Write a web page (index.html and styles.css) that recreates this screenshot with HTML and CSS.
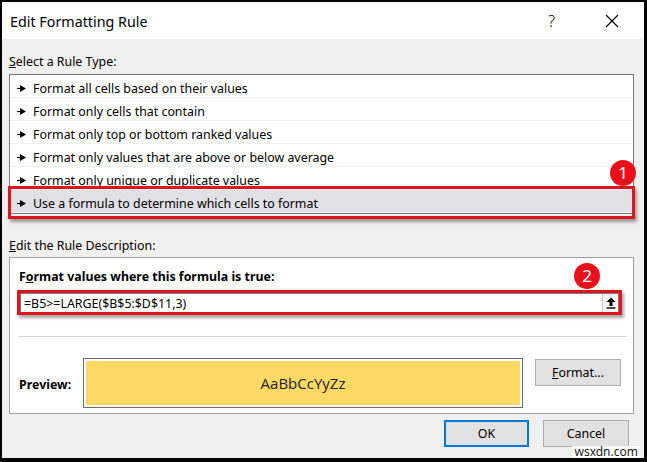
FILE: index.html
```html
<!DOCTYPE html>
<html lang="en">
<head>
    <meta charset="UTF-8">
    <title>Edit Formatting Rule</title>
    <link rel="stylesheet" href="styles.css">
</head>
<body>
    <div class="dialog">
        <div class="titlebar">
            <span class="title">Edit Formatting Rule</span>
            <span class="help">?</span>
            <svg class="close" width="14" height="14" viewBox="0 0 14 14">
                <path d="M1 1 L13 13 M13 1 L1 13" stroke="#000" stroke-width="1.1" fill="none"/>
            </svg>
        </div>

        <div class="content">
            <div class="label"><u>S</u>elect a Rule Type:</div>
            <div class="rule-list">
                <div class="rule"><svg class="arrow" width="9" height="7" viewBox="0 0 9 7"><path d="M0 3.5 H4" stroke="#000" stroke-width="1.2"/><path d="M3 0 L9 3.5 L3 7 Z" fill="#000"/></svg>Format all cells based on their values</div>
                <div class="rule"><svg class="arrow" width="9" height="7" viewBox="0 0 9 7"><path d="M0 3.5 H4" stroke="#000" stroke-width="1.2"/><path d="M3 0 L9 3.5 L3 7 Z" fill="#000"/></svg>Format only cells that contain</div>
                <div class="rule"><svg class="arrow" width="9" height="7" viewBox="0 0 9 7"><path d="M0 3.5 H4" stroke="#000" stroke-width="1.2"/><path d="M3 0 L9 3.5 L3 7 Z" fill="#000"/></svg>Format only top or bottom ranked values</div>
                <div class="rule"><svg class="arrow" width="9" height="7" viewBox="0 0 9 7"><path d="M0 3.5 H4" stroke="#000" stroke-width="1.2"/><path d="M3 0 L9 3.5 L3 7 Z" fill="#000"/></svg>Format only values that are above or below average</div>
                <div class="rule"><svg class="arrow" width="9" height="7" viewBox="0 0 9 7"><path d="M0 3.5 H4" stroke="#000" stroke-width="1.2"/><path d="M3 0 L9 3.5 L3 7 Z" fill="#000"/></svg>Format only unique or duplicate values</div>
                <div class="rule selected"><svg class="arrow" width="9" height="7" viewBox="0 0 9 7"><path d="M0 3.5 H4" stroke="#000" stroke-width="1.2"/><path d="M3 0 L9 3.5 L3 7 Z" fill="#000"/></svg>Use a formula to determine which cells to format</div>
                <div class="mark mark-row"></div>
                <div class="badge badge-1">1</div>
            </div>

            <div class="label label-desc"><u>E</u>dit the Rule Description:</div>
            <div class="desc">
                <div class="desc-title">F<u>o</u>rmat values where this formula is true:</div>
                <div class="formula">
                    <span class="formula-text">=B5&gt;=LARGE($B$5:$D$11,3)</span>
                    <span class="collapse">
                        <svg width="10" height="12" viewBox="0 0 10 12">
                            <path d="M5 0.5 L9.5 5 H6.5 V9 H3.5 V5 H0.5 Z" fill="#000"/>
                            <path d="M0.5 11 H9.5" stroke="#000" stroke-width="1.4"/>
                        </svg>
                    </span>
                    <div class="mark mark-formula"></div>
                </div>
                <div class="badge badge-2">2</div>
                <div class="divider"></div>
                <div class="preview-row">
                    <span class="preview-label">Preview:</span>
                    <div class="swatch"><span>AaBbCcYyZz</span></div>
                    <button class="btn btn-format"><u>F</u>ormat...</button>
                </div>
            </div>

            <div class="footer">
                <button class="btn btn-ok">OK</button>
                <button class="btn">Cancel</button>
            </div>
        </div>
        <div class="watermark">wsxdn.com</div>
    </div>
</body>
</html>
```

FILE: styles.css
```css
* {
    box-sizing: border-box;
}
body {
    margin: 0;
    background: #000;
    font-family: "Noto Sans", "Open Sans", sans-serif;
    font-size: 12.4px;
    color: #000;
}
.dialog {
    position: relative;
    width: 647px;
    height: 462px;
    border-style: solid;
    border-color: #000;
    border-width: 2px 3px 4px 2px;
    background: #f0f0f0;
    overflow: hidden;
}
.titlebar {
    height: 37px;
    background: #fff;
    display: flex;
    align-items: center;
    padding-left: 8px;
}
.title {
    font-size: 14.3px;
    flex: 1;
    padding-top: 1px;
}
.help {
    font-size: 16px;
    font-weight: 300;
    margin-right: 50px;
}
.close {
    margin-right: 25px;
}
.content {
    padding: 0 8px 0 7px;
}
.label {
    height: 18px;
    line-height: 18px;
    margin-top: 13px;
    margin-bottom: 4px;
    padding-top: 1px;
}
.label-desc {
    margin-top: 22px;
    margin-bottom: 3px;
}
.rule-list {
    position: relative;
    background: #fff;
    border: 1px solid #7a7a7a;
    margin-right: 2px;
}
.rule {
    height: 23px;
    display: flex;
    align-items: center;
    padding-left: 7px;
    padding-top: 4px;
    border-bottom: 1px solid #f0f0f0;
    white-space: nowrap;
}
.rule:last-of-type {
    border-bottom: none;
}
.rule.selected {
    background: #e0e0e6;
}
.arrow {
    margin-right: 7px;
}
.mark {
    position: absolute;
    border: 3px solid #e0141c;
    box-shadow: 2px 3px 3px rgba(0, 0, 0, 0.35);
}
.mark-row {
    left: -2px;
    top: 111px;
    width: 627px;
    height: 33px;
}
.badge {
    position: absolute;
    width: 26px;
    height: 26px;
    border-radius: 50%;
    background: #ea1019;
    color: #fff;
    font-size: 17px;
    line-height: 26px;
    text-align: center;
}
.badge-1 {
    left: 600px;
    top: 85px;
}
.badge-2 {
    left: 564px;
    top: 5px;
}
.desc {
    position: relative;
    height: 157px;
    background: #fff;
    border: 1px solid #a0a0a0;
    margin-right: 2px;
    padding: 10px 6px 0 9px;
}
.desc-title {
    font-weight: bold;
    height: 18px;
    line-height: 18px;
}
.formula {
    position: relative;
    height: 20px;
    margin: 7px 8px 0 1px;
    border: 1px solid #7a7a7a;
    background: #fff;
    display: flex;
    align-items: center;
    padding-left: 3px;
}
.formula-text {
    flex: 1;
    padding-top: 1px;
}
.collapse {
    width: 16px;
    height: 18px;
    display: flex;
    align-items: center;
    justify-content: center;
    background: #f4f4f4;
    border-left: 1px solid #c8c8c8;
}
.mark-formula {
    left: -4px;
    top: -4px;
    right: -4px;
    bottom: -3px;
}
.divider {
    height: 1px;
    background: #d4d4d4;
    margin: 23px 0 0 0;
}
.preview-row {
    display: flex;
    align-items: center;
    margin-top: 21px;
}
.preview-label {
    font-weight: bold;
    width: 64px;
    padding-top: 2px;
}
.swatch {
    width: 440px;
    height: 50px;
    border: 1px solid #6d6d6d;
    padding: 2px;
    background: #fff;
    margin-right: 12px;
}
.swatch span {
    display: flex;
    height: 100%;
    align-items: center;
    justify-content: center;
    background: #ffd966;
    font-family: "Open Sans", sans-serif;
    font-size: 15px;
    color: #222;
}
.btn {
    font-family: inherit;
    font-size: 12.4px;
    color: #000;
    width: 86px;
    height: 27px;
    background: #e1e1e1;
    border: 1px solid #adadad;
    padding: 0;
}
.btn-format {
    margin-top: -22px;
}
.footer {
    display: flex;
    justify-content: flex-end;
    gap: 14px;
    margin-top: 6px;
    padding-right: 7px;
}
.btn-ok {
    border: 2px solid #0078d7;
    width: 85px;
}
.watermark {
    position: absolute;
    right: 4px;
    bottom: 0;
    padding: 0 2px;
    background: rgba(255, 255, 255, 0.85);
    font-size: 12px;
    line-height: 12px;
    color: #222;
}
```
